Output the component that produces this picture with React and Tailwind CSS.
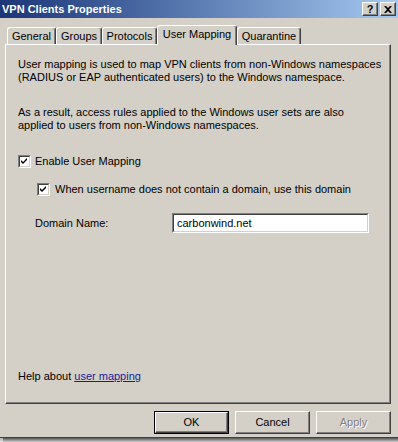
import React from 'react';

const font = "font-['Liberation_Sans',Arial,sans-serif]";

const Check = () => (
  <svg width="7" height="7" viewBox="0 0 7 7" className="block">
    <path d="M0 2 L2 4 L6 0 L6 2 L2 6 L0 4 Z" fill="#000" />
  </svg>
);

const Checkbox = () => (
  <div className="w-[13px] h-[13px] shrink-0 border-t border-l border-[#808080] border-r border-b border-r-white border-b-white">
    <div className="w-full h-full bg-white border-t border-l border-[#404040] border-r border-b border-r-[#d4d0c8] border-b-[#d4d0c8] flex items-center justify-center">
      <Check />
    </div>
  </div>
);

const TitleButton = ({ children }) => (
  <div className="w-[16px] h-[14px] bg-[#d4d0c8] border-t border-l border-white border-r border-b border-r-[#404040] border-b-[#404040] shadow-[inset_-1px_-1px_0_#808080] flex items-center justify-center">
    {children}
  </div>
);

const Tab = ({ label, width, active }) => (
  <div
    className={`${width} ${active ? 'h-[20px] relative z-10 -mb-px' : 'h-[17px]'} bg-[#d4d0c8] border-t border-l border-white border-r border-r-[#404040] rounded-tl-[3px] rounded-tr-[3px] shadow-[inset_-1px_0_0_#808080] flex items-center justify-center text-[11px] text-black ${active ? 'pb-[2px]' : 'pt-[1px]'}`}
  >
    {label}
  </div>
);

const Button = ({ label, primary, disabled }) => (
  <div className={`w-[75px] h-[23px] ${primary ? 'border border-black' : ''}`}>
    <div className="w-full h-full bg-[#d4d0c8] border-t border-l border-white border-r border-b border-r-[#404040] border-b-[#404040] shadow-[inset_-1px_-1px_0_#808080] flex items-center justify-center text-[11px]">
      {disabled ? (
        <span className="text-[#808080] [text-shadow:1px_1px_0_#ffffff]">{label}</span>
      ) : (
        <span className="text-black">{label}</span>
      )}
    </div>
  </div>
);

export default function App() {
  return (
    <div className={`w-[398px] h-[442px] bg-[#d4d0c8] flex flex-col ${font}`}>
      <div className="h-[438px] bg-[#d4d0c8] border-b border-[#404040] flex flex-col">
        {/* title bar */}
        <div className="h-[18px] bg-gradient-to-r from-[#1c3578] to-[#a6caf0] flex items-center pl-[2px] pr-[2px]">
          <span className="text-white font-bold text-[11px] leading-none flex-1">VPN Clients Properties</span>
          <div className="flex gap-[2px]">
            <TitleButton>
              <span className="text-black font-bold text-[11px] leading-none">?</span>
            </TitleButton>
            <TitleButton>
              <svg width="8" height="7" viewBox="0 0 8 7" className="block">
                <path d="M0 0 L2 0 L4 2 L6 0 L8 0 L5 3.5 L8 7 L6 7 L4 5 L2 7 L0 7 L3 3.5 Z" fill="#000" />
              </svg>
            </TitleButton>
          </div>
        </div>

        {/* tabs */}
        <div className="h-[26px] flex items-end pl-[7px]">
          <Tab label="General" width="w-[49px]" />
          <Tab label="Groups" width="w-[46px]" />
          <Tab label="Protocols" width="w-[55px]" />
          <Tab label="User Mapping" width="w-[80px]" active />
          <Tab label="Quarantine" width="w-[64px]" />
        </div>

        {/* panel */}
        <div className="ml-[5px] w-[386px] h-[360px] border-t border-l border-white border-r border-b border-r-[#404040] border-b-[#404040] shadow-[inset_-1px_-1px_0_#808080] flex flex-col pl-[12px] pt-[13px] pb-[20px] text-[11px] leading-[13px] text-black">
          <p>
            User mapping is used to map VPN clients from non-Windows namespaces
            <br />
            (RADIUS or EAP authenticated users) to the Windows namespace.
          </p>
          <p className="mt-[22px]">
            As a result, access rules applied to the Windows user sets are also
            <br />
            applied to users from non-Windows namespaces.
          </p>

          <div className="mt-[23px] flex items-center gap-[4px]">
            <Checkbox />
            <span>Enable User Mapping</span>
          </div>

          <div className="mt-[15px] ml-[19px] flex items-center gap-[5px]">
            <Checkbox />
            <span>When username does not contain a domain, use this domain</span>
          </div>

          <div className="mt-[17px] ml-[17px] flex items-center">
            <span className="w-[137px]">Domain Name:</span>
            <div className="w-[197px] h-[20px] border-t border-l border-[#808080] border-r border-b border-r-white border-b-white">
              <div className="w-full h-full bg-white border-t border-l border-[#404040] border-r border-b border-r-[#d4d0c8] border-b-[#d4d0c8] flex items-center pl-[3px]">
                carbonwind.net
              </div>
            </div>
          </div>

          <p className="mt-auto">
            Help about <span className="text-[#1a1a9a] underline">user mapping</span>
          </p>
        </div>

        {/* buttons */}
        <div className="mt-[7px] flex justify-end gap-[6px] pr-[7px]">
          <Button label="OK" primary />
          <Button label="Cancel" />
          <Button label="Apply" disabled />
        </div>
      </div>
      {/* drop shadow under the window */}
      <div className="flex-1 flex">
        <div className="w-[3px] bg-gradient-to-b from-[#b0b0b0] to-[#e0e0e0]" />
        <div className="flex-1 bg-gradient-to-b from-[#555555] to-[#cfcfcf]" />
      </div>
    </div>
  );
}
